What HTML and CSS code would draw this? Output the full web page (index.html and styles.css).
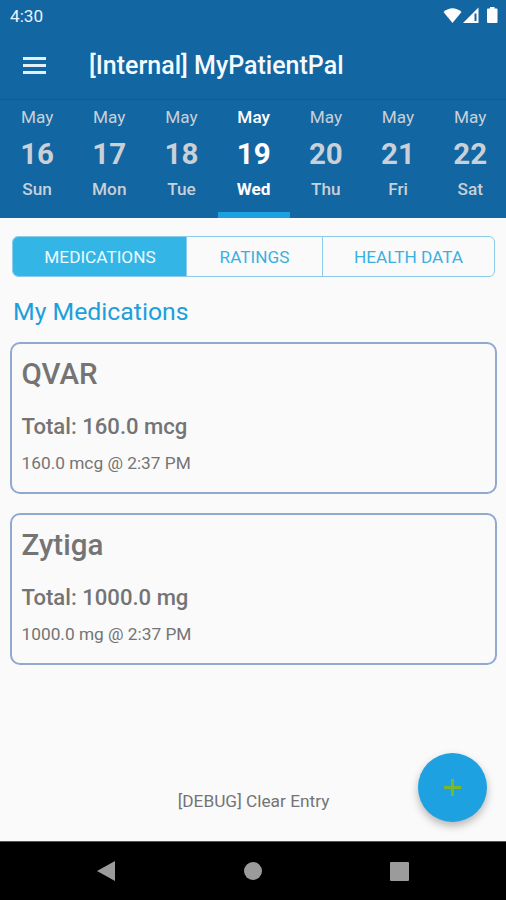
FILE: index.html
```html
<!DOCTYPE html>
<html lang="en">
<head>
<meta charset="utf-8">
<title>MyPatientPal</title>
<link rel="stylesheet" href="styles.css">
</head>
<body>
<header class="status">
  <span class="clock">4:30</span>
  <svg class="status-icons" width="56" height="20" viewBox="0 0 56 20">
    <path d="M0.5 6Q9.500-1.500 18.500 6L9.500 17Z"/>
    <path d="M35.500 1.500V17H20Z"/>
    <path class="dim" d="M31.500 7.500H33.500V15H31.500Z"/>
    <path d="M47 2.500V1H51.500V2.500H53.500Q54.500 2.500 54.500 3.500V16Q54.500 17 53.500 17H45Q44 17 44 16V3.500Q44 2.500 45 2.500Z"/>
  </svg>
</header>
<div class="toolbar">
  <svg class="menu" width="23" height="17" viewBox="0 0 23 17"><path d="M0 0H23V3H0ZM0 7H23V10H0ZM0 14H23V17H0Z"/></svg>
  <h1 class="title">[Internal] MyPatientPal</h1>
</div>
<nav class="days">
  <div class="day"><span class="month">May</span><b class="date">16</b><span class="weekday">Sun</span></div>
  <div class="day"><span class="month">May</span><b class="date">17</b><span class="weekday">Mon</span></div>
  <div class="day"><span class="month">May</span><b class="date">18</b><span class="weekday">Tue</span></div>
  <div class="day selected"><span class="month">May</span><b class="date">19</b><span class="weekday">Wed</span></div>
  <div class="day"><span class="month">May</span><b class="date">20</b><span class="weekday">Thu</span></div>
  <div class="day"><span class="month">May</span><b class="date">21</b><span class="weekday">Fri</span></div>
  <div class="day"><span class="month">May</span><b class="date">22</b><span class="weekday">Sat</span></div>
</nav>
<main class="content">
  <div class="tabs">
    <div class="tab active"><span>MEDICATIONS</span></div>
    <div class="tab"><span>RATINGS</span></div>
    <div class="tab"><span>HEALTH DATA</span></div>
  </div>
  <h2 class="heading">My Medications</h2>
  <section class="card">
    <h3 class="name">QVAR</h3>
    <p class="total">Total: 160.0 mcg</p>
    <p class="dose">160.0 mcg @ 2:37 PM</p>
  </section>
  <section class="card">
    <h3 class="name">Zytiga</h3>
    <p class="total">Total: 1000.0 mg</p>
    <p class="dose">1000.0 mg @ 2:37 PM</p>
  </section>
  <div class="debug">[DEBUG] Clear Entry</div>
  <div class="fab"><svg width="17" height="17" viewBox="0 0 17 17"><path d="M8.500 0V17M0 8.500H17"/></svg></div>
</main>
<footer class="navbar">
  <svg width="18" height="22" viewBox="0 0 18 22"><path d="M0 11L18 1V21Z"/></svg>
  <svg width="18" height="18" viewBox="0 0 18 18"><circle cx="9" cy="9" r="9"/></svg>
  <svg width="19" height="19" viewBox="0 0 19 19"><rect width="19" height="19" rx="1"/></svg>
</footer>
</body>
</html>
```

FILE: styles.css
```css
* { box-sizing: border-box; margin: 0; padding: 0; }
body {
  width: 506px;
  height: 900px;
  display: flex;
  flex-direction: column;
  overflow: hidden;
  background: #fafafa;
  font-family: Roboto, "Liberation Sans", sans-serif;
  color: #747474;
}
.status {
  height: 32px;
  display: flex;
  justify-content: space-between;
  padding: 6px 7px 0 10px;
  background: #1266a2;
}
.clock { font-size: 17.200px; line-height: 20px; color: #e8f3fb; }
.status-icons { fill: #fff; }
.status-icons .dim { fill: #1266a2; }
.toolbar {
  height: 68px;
  display: flex;
  align-items: center;
  padding: 0 23px;
  background: #1266a2;
  border-bottom: 1px solid #105b93;
}
.menu { fill: #e3f0fb; margin-right: 43px; }
.title { font-size: 25px; line-height: 30px; font-weight: 500; color: #f5faff; }
.days {
  height: 118px;
  display: grid;
  grid-template-columns: repeat(7, 72.2px);
  justify-content: start;
  padding-left: 1px;
  background: #1266a2;
  color: #c9d0d8;
}
.day {
  display: flex;
  flex-direction: column;
  align-items: center;
  padding-top: 7px;
  border-bottom: 6px solid transparent;
}
.month { font-size: 17.200px; line-height: 20px; }
.date { font-size: 29.500px; line-height: 36px; margin-top: 9px; }
.weekday { font-size: 17.200px; line-height: 20px; margin-top: 7px; font-weight: 500; }
.selected { color: #fff; border-color: #1da1e0; }
.selected .month { font-weight: 500; }
.selected .weekday { font-weight: 700; }
.content { height: 623px; position: relative; padding: 18px 9px 0 10px; }
.tabs {
  display: grid;
  grid-template-columns: 173px 136px 1fr;
  height: 41px;
  margin: 0 2px;
  border: 1px solid #8ccbea;
  border-radius: 6px;
  overflow: hidden;
}
.tab { display: flex; align-items: center; justify-content: center; font-size: 17.200px; color: #39b1df; }
.tab + .tab { border-left: 1px solid #8ccbea; }
.active { background: #33b5e5; color: #f0fbff; padding-left: 1px; }
.heading { font-size: 24.800px; line-height: 30px; font-weight: 400; color: #1d9fdb; margin: 20px 3px 15px; }
.card {
  height: 152px;
  margin-bottom: 19px;
  padding: 12px 9.500px;
  border: 2px solid #8fa9cf;
  border-radius: 10px;
}
.name { font-size: 29.500px; line-height: 36px; font-weight: 500; }
.total { font-size: 22.100px; line-height: 26px; font-weight: 500; margin-top: 21px; }
.dose { font-size: 17.300px; line-height: 20px; margin-top: 14px; }
.debug { margin-top: 126px; text-align: center; font-size: 17.300px; line-height: 20px; }
.fab {
  position: absolute;
  right: 19px;
  bottom: 19px;
  width: 69px;
  height: 69px;
  border-radius: 50%;
  display: flex;
  align-items: center;
  justify-content: center;
  background: #1da1e0;
  box-shadow: 0 4px 8px rgba(0, 0, 0, .28);
}
.fab path { stroke: #78b82a; stroke-width: 3; }
.navbar {
  height: 59px;
  display: flex;
  align-items: center;
  justify-content: space-between;
  padding: 0 97px;
  background: #000;
  border-top: 1px solid #555;
  fill: #9b9b9b;
}
```
